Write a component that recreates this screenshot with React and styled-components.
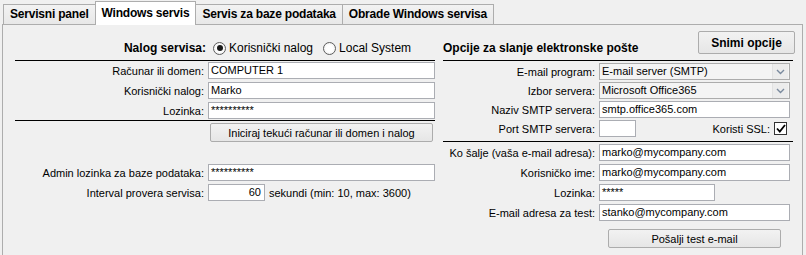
import React from "react";
import styled, { createGlobalStyle } from "styled-components";

const GlobalStyle = createGlobalStyle`
  html, body {
    margin: 0;
    padding: 0;
    background: #f0f0f0;
  }
  body {
    font-family: "Liberation Sans", Arial, sans-serif;
    font-size: 11px;
    color: #000;
  }
`;

const Window = styled.div`
  width: 806px;
  height: 255px;
  overflow: hidden;
  box-sizing: border-box;
  padding: 1px 3px 0 2px;
`;

const TabBar = styled.div`
  display: flex;
  align-items: flex-end;
  height: 23px;
  padding-left: 2px;
  position: relative;
  z-index: 1;
`;

const Tab = styled.div`
  box-sizing: border-box;
  height: ${(p) => (p.$active ? 24 : 20)}px;
  margin-bottom: ${(p) => (p.$active ? -1 : 0)}px;
  margin-left: -1px;
  padding: 0 6px 1px;
  display: flex;
  align-items: center;
  font-size: 12px;
  font-weight: bold;
  letter-spacing: -0.2px;
  white-space: nowrap;
  border: 1px solid #adadad;
  border-bottom: none;
  background: ${(p) => (p.$active ? "#fff" : "linear-gradient(#f2f2f2, #e8e8e8)")};
`;

const Panel = styled.div`
  box-sizing: border-box;
  height: 245px;
  border: 1px solid #adadad;
  background: #f0f0f0;
  padding-left: 12px;
  display: grid;
  grid-template-columns: 420px 350px;
  column-gap: 8px;
  align-content: start;
`;

const Column = styled.div`
  display: flex;
  flex-direction: column;
`;

const Header = styled.div`
  box-sizing: border-box;
  height: 36px;
  padding-bottom: 4px;
  border-bottom: 1px solid #000;
  display: flex;
  align-items: flex-end;
`;

const HeaderLabel = styled.div`
  width: ${(p) => p.$width || "auto"};
  text-align: ${(p) => p.$align || "left"};
  font-size: 12px;
  font-weight: bold;
  line-height: 16px;
  white-space: nowrap;
`;

const RadioGroup = styled.div`
  display: flex;
  align-items: center;
  margin-left: 7px;
  line-height: 16px;
  font-size: 12px;
`;

const RadioOption = styled.label`
  display: flex;
  align-items: center;
  gap: 3px;
  margin-right: ${(p) => p.$gap || 0}px;
  white-space: nowrap;
`;

const RadioDot = styled.span`
  box-sizing: border-box;
  width: 13px;
  height: 13px;
  border-radius: 50%;
  border: 1px solid #5d5d5d;
  background: radial-gradient(circle, #ffffff 40%, #e8e8e8);
  display: flex;
  align-items: center;
  justify-content: center;

  &::after {
    content: "";
    width: 6px;
    height: 6px;
    border-radius: 50%;
    background: #1a1a1a;
    display: ${(p) => (p.$checked ? "block" : "none")};
  }
`;

const Form = styled.div`
  display: grid;
  grid-template-columns: ${(p) => p.$label}px ${(p) => p.$field}px;
  column-gap: 4px;
  row-gap: ${(p) => p.$rowGap}px;
  align-items: center;
  padding-top: ${(p) => p.$top || 0}px;
  padding-bottom: ${(p) => p.$bottom || 0}px;
  margin-top: ${(p) => p.$margin || 0}px;
  border-bottom: ${(p) => (p.$rule ? "1px solid #000" : "none")};
`;

const Label = styled.div`
  text-align: right;
  white-space: nowrap;
`;

const Field = styled.div`
  display: flex;
  align-items: center;
  height: 17px;
`;

const Input = styled.div`
  box-sizing: border-box;
  height: 17px;
  width: ${(p) => p.$width || "100%"};
  border: 1px solid #abadb3;
  background: #fff;
  padding: 0 ${(p) => (p.$right ? 3 : 2)}px;
  line-height: 15px;
  text-align: ${(p) => (p.$right ? "right" : "left")};
  white-space: nowrap;
  overflow: hidden;
`;

const Select = styled.div`
  box-sizing: border-box;
  height: 17px;
  width: 100%;
  border: 1px solid #acacac;
  background: #f4f4f4;
  display: flex;
  align-items: center;
  padding-left: 2px;
  line-height: 15px;
`;

const SelectText = styled.span`
  flex: 1;
  white-space: nowrap;
`;

const DropButton = styled.span`
  box-sizing: border-box;
  width: 16px;
  height: 15px;
  margin-right: 1px;
  border-left: 1px solid #e2e2e2;
  background: #ececec;
  display: flex;
  align-items: center;
  justify-content: center;
`;

const Suffix = styled.span`
  margin-left: 4px;
  white-space: nowrap;
`;

const Spacer = styled.span`
  flex: 1;
`;

const CheckBox = styled.span`
  box-sizing: border-box;
  width: 13px;
  height: 13px;
  margin: 0 3px 0 4px;
  border: 1px solid #333;
  background: #fff;
  display: flex;
  align-items: center;
  justify-content: center;
`;

const ButtonRow = styled.div`
  display: flex;
  justify-content: ${(p) => p.$justify || "flex-start"};
  margin-left: ${(p) => p.$indent || 0}px;
  margin-top: ${(p) => p.$top || 0}px;
  width: ${(p) => (p.$width ? `${p.$width}px` : "auto")};
`;

const Button = styled.div`
  box-sizing: border-box;
  height: ${(p) => p.$height || 19}px;
  width: ${(p) => p.$width}px;
  border: 1px solid #acacac;
  border-radius: 2px;
  background: linear-gradient(#f2f2f2, #e6e6e6);
  display: flex;
  align-items: center;
  justify-content: center;
  font-size: ${(p) => (p.$bold ? 12 : 11)}px;
  font-weight: ${(p) => (p.$bold ? "bold" : "normal")};
  white-space: nowrap;
`;

const HeaderButton = styled(Button)`
  margin-bottom: 2px;
  margin-right: -2px;
`;

const Chevron = () => (
  <svg width="9" height="6" viewBox="0 0 9 6">
    <path d="M1 1 L4.5 4.5 L8 1" fill="none" stroke="#7a8a9e" strokeWidth="1.4" />
  </svg>
);

const Check = () => (
  <svg width="10" height="9" viewBox="0 0 10 9">
    <path d="M1 4.5 L3.8 7.5 L9 1" fill="none" stroke="#000" strokeWidth="1.8" />
  </svg>
);

function Row({ label, children }) {
  return (
    <>
      <Label>{label}</Label>
      <Field>{children}</Field>
    </>
  );
}

export default function App() {
  return (
    <Window>
      <GlobalStyle />
      <TabBar>
        <Tab>Servisni panel</Tab>
        <Tab $active>Windows servis</Tab>
        <Tab>Servis za baze podataka</Tab>
        <Tab>Obrade Windows servisa</Tab>
      </TabBar>
      <Panel>
        <Column>
          <Header>
            <HeaderLabel $width="191px" $align="right">Nalog servisa:</HeaderLabel>
            <RadioGroup>
              <RadioOption $gap={10}>
                <RadioDot $checked />
                Korisnički nalog
              </RadioOption>
              <RadioOption>
                <RadioDot />
                Local System
              </RadioOption>
            </RadioGroup>
          </Header>
          <Form $label={189} $field={227} $rowGap={3} $top={1} $bottom={1} $rule>
            <Row label="Računar ili domen:">
              <Input>COMPUTER 1</Input>
            </Row>
            <Row label="Korisnički nalog:">
              <Input>Marko</Input>
            </Row>
            <Row label="Lozinka:">
              <Input>**********</Input>
            </Row>
          </Form>
          <ButtonRow $indent={195} $top={2}>
            <Button $width={223}>Iniciraj tekući računar ili domen i nalog</Button>
          </ButtonRow>
          <Form $label={189} $field={227} $rowGap={3} $margin={22}>
            <Row label="Admin lozinka za baze podataka:">
              <Input>**********</Input>
            </Row>
            <Row label="Interval provera servisa:">
              <Input $width="57px" $right>60</Input>
              <Suffix>sekundi (min: 10, max: 3600)</Suffix>
            </Row>
          </Form>
        </Column>

        <Column>
          <Header>
            <HeaderLabel>Opcije za slanje elektronske pošte</HeaderLabel>
            <Spacer />
            <HeaderButton $bold $height={23} $width={97}>
              Snimi opcije
            </HeaderButton>
          </Header>
          <Form $label={152} $field={191} $rowGap={2} $top={2} $bottom={4} $rule>
            <Row label="E-mail program:">
              <Select>
                <SelectText>E-mail server (SMTP)</SelectText>
                <DropButton>
                  <Chevron />
                </DropButton>
              </Select>
            </Row>
            <Row label="Izbor servera:">
              <Select>
                <SelectText>Microsoft Office365</SelectText>
                <DropButton>
                  <Chevron />
                </DropButton>
              </Select>
            </Row>
            <Row label="Naziv SMTP servera:">
              <Input>smtp.office365.com</Input>
            </Row>
            <Row label="Port SMTP servera:">
              <Input $width="37px" />
              <Spacer />
              <span>Koristi SSL:</span>
              <CheckBox>
                <Check />
              </CheckBox>
            </Row>
          </Form>
          <Form $label={152} $field={191} $rowGap={3} $top={2}>
            <Row label="Ko šalje (vaša e-mail adresa):">
              <Input>marko@mycompany.com</Input>
            </Row>
            <Row label="Korisničko ime:">
              <Input>marko@mycompany.com</Input>
            </Row>
            <Row label="Lozinka:">
              <Input $width="116px">*****</Input>
            </Row>
            <Row label="E-mail adresa za test:">
              <Input>stanko@mycompany.com</Input>
            </Row>
          </Form>
          <ButtonRow $indent={156} $top={8} $width={191} $justify="center">
            <Button $width={173}>Pošalji test e-mail</Button>
          </ButtonRow>
        </Column>
      </Panel>
    </Window>
  );
}
